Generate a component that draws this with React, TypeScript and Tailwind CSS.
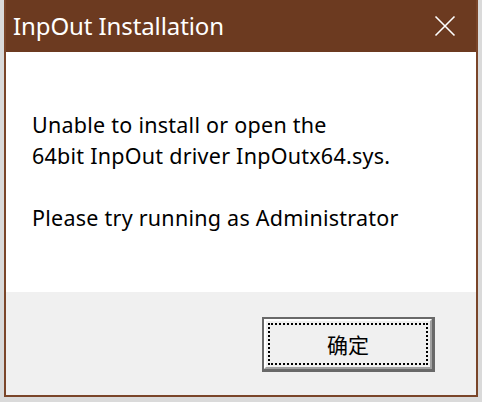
import React from "react";

export default function App() {
  return (
    <div className="w-[482px] h-[402px] bg-[#dadada] overflow-hidden pl-[4px] pt-0" style={{ fontFamily: '"Noto Sans", "Noto Sans CJK SC", sans-serif' }}>
      <div className="w-[474px] h-[397px] border-2 border-t-0 border-[#7a4529] flex flex-col bg-white">
        <div className="h-[52px] bg-[#6c3a20] flex items-center justify-between pl-[7px] pr-[20px] shrink-0">
          <span className="text-white text-[24px] leading-none tracking-[-0.1px] pb-[1px]">InpOut Installation</span>
          <svg width="22" height="22" viewBox="0 0 22 22" className="mb-[1px]">
            <path d="M1.5 1.5 L20.5 20.5 M20.5 1.5 L1.5 20.5" stroke="#ffffff" strokeWidth="1.6" fill="none" />
          </svg>
        </div>
        <div className="h-[240px] bg-white pt-[57px] pl-[26px] text-[21.5px] leading-[31px] text-black tracking-[0.25px]">
          <div>Unable to install or open the</div>
          <div>64bit InpOut driver InpOutx64.sys.</div>
          <div className="h-[31px]"></div>
          <div>Please try running as Administrator</div>
        </div>
        <div className="flex-1 bg-[#f0f0f0] flex justify-end items-start pt-[25px] pr-[41px]">
          <div className="w-[173px] h-[55px] border-2 border-[#696969] border-b-[3px] border-r-[3px]">
            <div className="w-full h-full border-2 border-t-white border-l-white border-b-[#a0a0a0] border-r-[#a0a0a0] bg-[#f0f0f0] p-[2px]">
              <div className="w-full h-full border-[2px] border-dotted border-black flex items-center justify-center">
                <span className="text-[21px] text-black leading-none" style={{ fontFamily: '"Noto Sans CJK SC", sans-serif' }}>确定</span>
              </div>
            </div>
          </div>
        </div>
      </div>
    </div>
  );
}
